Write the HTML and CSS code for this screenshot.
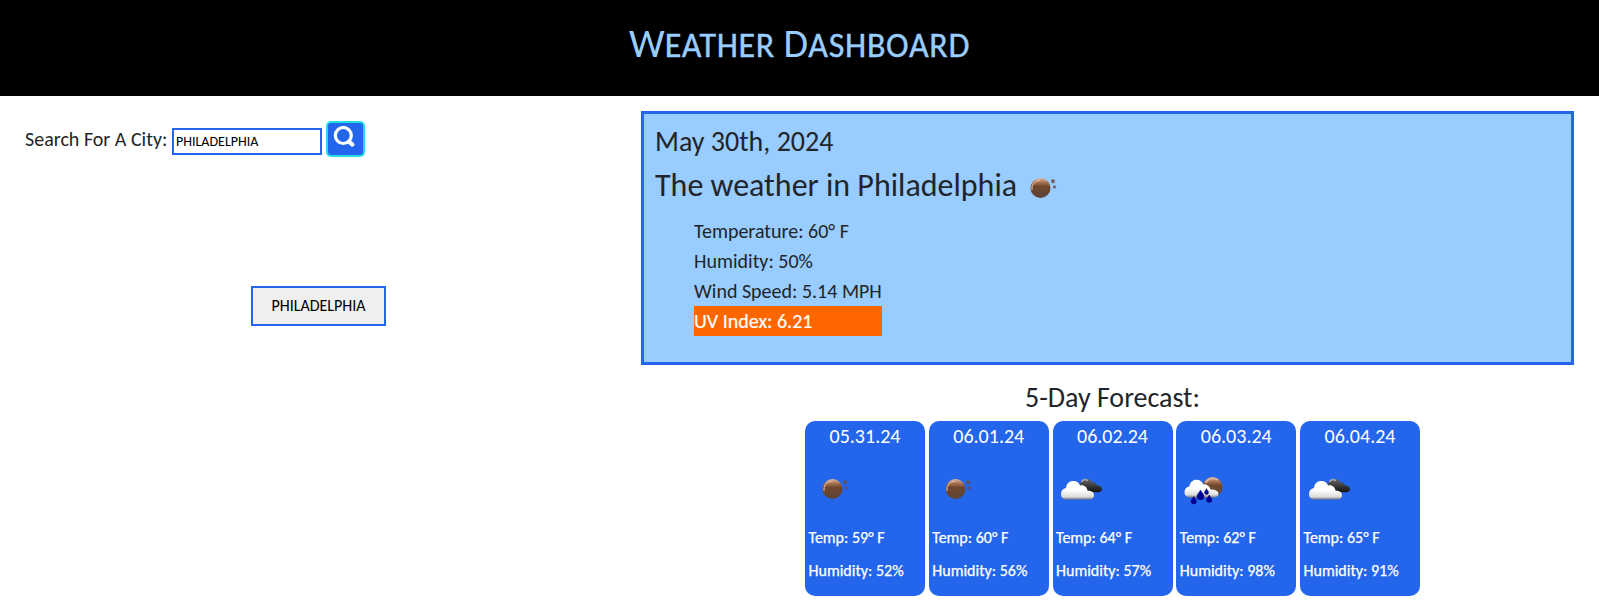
FILE: index.html
```
<!DOCTYPE html>
<html lang="en">
<head>
<meta charset="utf-8">
<title>Weather Dashboard</title>
<link rel="stylesheet" href="styles.css">
</head>
<body>
<svg class="defs" aria-hidden="true">
  <defs>
    <linearGradient id="moon" x1="0" y1="0" x2="0" y2="1"><stop offset="0" stop-color="#e0b49c"/><stop offset=".22" stop-color="#a87252"/><stop offset=".42" stop-color="#70472e"/><stop offset="1" stop-color="#5c4436"/></linearGradient>
    <linearGradient id="white" x1="0" y1="0" x2="0" y2="1"><stop offset=".5" stop-color="#fff"/><stop offset=".85" stop-color="#dcdcdc"/><stop offset="1" stop-color="#777"/></linearGradient>
    <linearGradient id="dark" x1="0" y1="0" x2="0" y2="1"><stop offset="0" stop-color="#666"/><stop offset=".5" stop-color="#3c3c3c"/><stop offset="1" stop-color="#111"/></linearGradient>
    <symbol id="clear" viewBox="0 0 50 50">
      <circle cx="23.500" cy="26" r="10" fill="url(#moon)"/>
      <path d="M15 28a8.500 8.500 0 0 1 8-10" fill="none" stroke="#e6c3b0" stroke-width="1"/>
      <path d="M36 17l.6 1.300 1.500.2-1.100 1.100.3 1.500-1.300-.7-1.300.7.3-1.500-1.100-1.100 1.500-.2zM37.500 23.300l.4 1 1.200.1-.9.800.2 1.200-.9-.6-.9.6.2-1.200-.9-.8 1.200-.1z" fill="#6b4c46" stroke="#6b4c46" stroke-width=".4"/>
    </symbol>
    <symbol id="clouds" viewBox="-1 0 50 50">
      <path d="M23 29c-1-6 0-13 6.500-13 3 0 5 1.500 5.700 3.500 2.500-.8 4.500.5 4.800 3.100 3.500.2 5.300 1.600 5 3.600-.3 2-1.800 3-4.500 3z" fill="url(#dark)"/>
      <path d="M24.500 19c1-2.300 4-3 6.500-1.500" fill="none" stroke="#aaa" stroke-width="1.500"/>
      <path d="M9.500 36.500c-3.500 0-5.500-2.500-5.500-5.500 0-3.500 2-5.500 5-6 .5-4.500 3.300-7 7.500-7 3.500 0 5.500 1.500 6.500 4.500 4-1 7 1.500 7.500 5.200 4-.2 6.500 1.500 6.500 4.500 0 2.800-2 4.300-5 4.300z" fill="url(#white)"/>
    </symbol>
    <symbol id="rain" viewBox="0 0 50 50">
      <circle cx="32.500" cy="24" r="10" fill="url(#moon)"/>
      <path d="M25.500 20c2-4.500 8-6 12-3" fill="none" stroke="#d8b8a8" stroke-width="1.500"/>
      <path d="M10 34.500c-3.500 0-5.500-2.500-5.500-5.300 0-3.300 2-5.500 5-6 .5-4.200 3.500-6.500 7-6.500 3.500 0 5.500 1.500 6.500 4.500 4 0 6.500 1.500 7.500 5.200 5-.2 8 1.500 8 4.200 0 2.600-2 3.900-5 3.900z" fill="url(#white)"/>
      <path d="M20.500 27c1 2.700 3.500 4 3.500 6.300a3.500 3.500 0 0 1-7 0C17 31 19.500 29.700 20.500 27zM26.500 25.500c.5 1.700 2 2.500 2 4a2 2 0 0 1-4 0c0-1.500 1.500-2.300 2-4zM13.700 33.500c.7 2 2.700 3 2.700 4.800a2.700 2.700 0 0 1-5.400 0c0-1.800 2-2.800 2.700-4.800zM29.200 32c.7 2 2.700 3 2.700 4.800a2.700 2.700 0 0 1-5.400 0c0-1.800 2-2.800 2.700-4.800z" fill="#00009a" stroke="#000050" stroke-width=".5"/>
    </symbol>
  </defs>
</svg>
<header class="header"><h1 class="title"><span class="initial">W</span>eather <span class="initial">D</span>ashboard</h1></header>
<main class="main">
  <aside class="sidebar">
    <form class="search">
      <label class="search-label" for="city">Search For A City:</label>
      <input class="search-input" id="city" value="PHILADELPHIA">
      <button class="search-button" type="button" aria-label="Search"><svg width="22" height="22" viewBox="0 0 22 22"><circle cx="10.300" cy="9.500" r="8" fill="none" stroke="#fff" stroke-width="3.200"/><path d="M16 15.500l3.200 3" stroke="#fff" stroke-width="4.400" stroke-linecap="round"/></svg></button>
    </form>
    <button class="history" type="button">PHILADELPHIA</button>
  </aside>
  <section class="content">
    <article class="current">
      <h2 class="date">May 30th, 2024</h2>
      <div class="place"><h2 class="city">The weather in Philadelphia</h2><svg class="icon"><use href="#clear"/></svg></div>
      <ul class="stats">
        <li>Temperature: 60° F</li>
        <li>Humidity: 50%</li>
        <li>Wind Speed: 5.14 MPH</li>
        <li class="uv">UV Index: 6.21</li>
      </ul>
    </article>
    <h2 class="forecast-title">5-Day Forecast:</h2>
    <div class="forecast">
      <article class="day"><h3 class="day-date">05.31.24</h3><svg class="icon"><use href="#clear"/></svg><p class="temp">Temp: 59° F</p><p class="hum">Humidity: 52%</p></article>
      <article class="day"><h3 class="day-date">06.01.24</h3><svg class="icon"><use href="#clear"/></svg><p class="temp">Temp: 60° F</p><p class="hum">Humidity: 56%</p></article>
      <article class="day"><h3 class="day-date">06.02.24</h3><svg class="icon"><use href="#clouds"/></svg><p class="temp">Temp: 64° F</p><p class="hum">Humidity: 57%</p></article>
      <article class="day"><h3 class="day-date">06.03.24</h3><svg class="icon"><use href="#rain"/></svg><p class="temp">Temp: 62° F</p><p class="hum">Humidity: 98%</p></article>
      <article class="day"><h3 class="day-date">06.04.24</h3><svg class="icon"><use href="#clouds"/></svg><p class="temp">Temp: 65° F</p><p class="hum">Humidity: 91%</p></article>
    </div>
  </section>
</main>
</body>
</html>
```
FILE: styles.css
```
* { box-sizing: border-box; }
body { margin: 0; background: #fff; color: #212529; font-family: Calibri, Carlito, Lato, sans-serif; font-size: 20px; line-height: 30px; overflow: hidden; }
h1, h2, h3, p, ul { margin: 0; padding: 0; font-weight: 400; }
button, input { font-family: inherit; color: #000; }
.defs { display: block; width: 0; height: 0; }
.header { height: 96px; background: #000; color: #9cf; text-align: center; padding-top: 18px; }
.title { font-size: 34px; line-height: 52px; letter-spacing: .7px; text-transform: uppercase; white-space: nowrap; -webkit-text-stroke: .4px #9cf; }
.initial { font-size: 40px; letter-spacing: .3px; -webkit-text-stroke: 0; }
.main { display: flex; height: 504px; }
.sidebar { width: 641px; padding: 25px 0 0 25px; }
.search { display: flex; height: 36px; white-space: nowrap; }
.search-label { width: 147px; line-height: 36px; }
.search-input { width: 150px; height: 27px; margin: 7px 4px 0 0; border: 2px solid #2466eb; padding: 1px 2px; font-size: 14px; border-radius: 0; }
.search-button { display: flex; align-items: flex-start; width: 39px; height: 36px; padding: 3px 0 0 5px; border: 2px solid #20dfe3; border-radius: 5px; background: #2466eb; }
.search-button svg { display: block; }
.history { display: block; width: 135px; height: 40px; margin: 129px 0 0 226px; padding: 0 0 1px; border: 2px solid #2466eb; background: #efefef; font-size: 16px; }
.content { width: 933px; padding-top: 15px; }
.current { height: 254px; border: 3px solid #2466eb; background: #9cf; padding: 11px; }
.date { font-size: 28px; line-height: 34px; }
.place { display: flex; height: 50px; white-space: nowrap; }
.city { font-size: 32px; line-height: 40px; width: 362px; padding-top: 7px; }
.icon { display: block; width: 50px; height: 50px; flex: none; }
.place .icon { margin-top: 3px; }
.stats { width: 188px; margin: 7px 0 0 39px; list-style: none; white-space: nowrap; }
.uv { background: #f60; color: #fff; -webkit-text-stroke: .2px #fff; }
.forecast-title { margin: 15px 0 6px 10px; font-size: 28px; line-height: 35px; text-align: center; }
.forecast { display: flex; gap: 3.750px; margin-left: 164px; }
.day { width: 120px; height: 175px; flex: none; border-radius: 10px; background: #2466eb; color: #fff; padding: 0 3.500px; }
.day-date { font-size: 20px; line-height: 31px; text-align: center; height: 42px; }
.temp, .hum { font-size: 16px; line-height: 24px; height: 33px; white-space: nowrap; -webkit-text-stroke: .25px #fff; }
.temp { margin-top: 13px; }
```
